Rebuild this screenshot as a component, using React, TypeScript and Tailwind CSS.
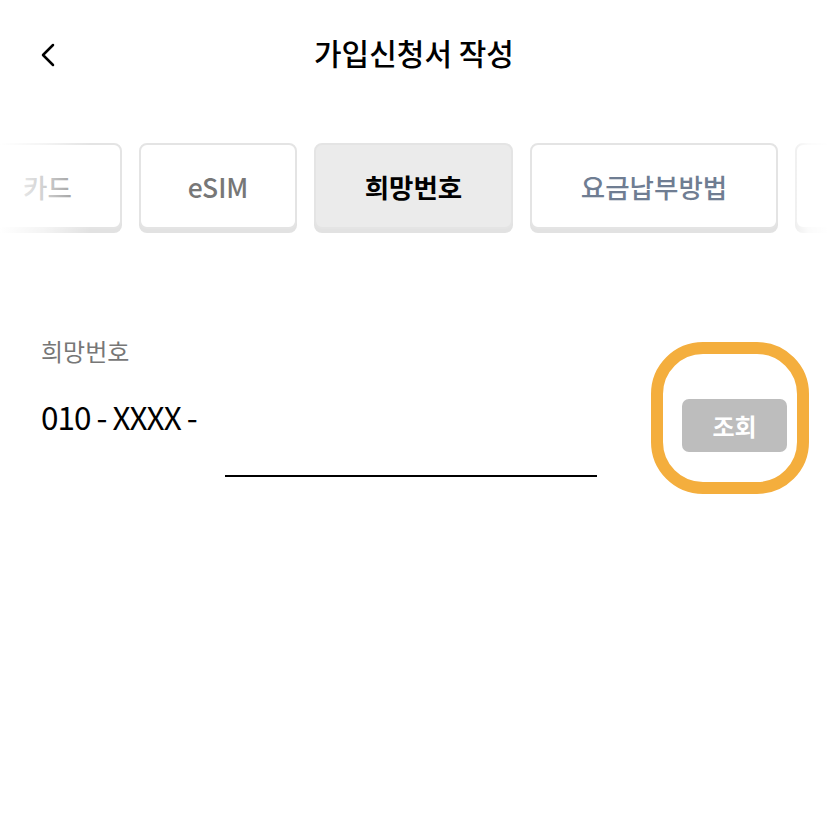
import { ChevronLeft } from "lucide-react";

const font = "font-['Noto_Sans_CJK_KR','Noto_Sans',sans-serif]";

const tabs = [
  { label: "카드", cls: "w-[149px] -ml-[27px] text-[#888888]" },
  { label: "eSIM", cls: "w-[158px] text-[#777777]" },
  { label: "희망번호", cls: "w-[199px] bg-[#ebebeb] font-bold text-black", active: true },
  { label: "요금납부방법", cls: "w-[248px] text-[#6f7d92]" },
  { label: "", cls: "w-[120px]" },
];

export default function App() {
  return (
    <div className={`relative w-[828px] h-[834px] bg-white overflow-hidden ${font}`}>
      <header className="relative h-[104px] flex items-center justify-center">
        <button className="absolute left-[28px] top-[35px] text-black" aria-label="뒤로">
          <ChevronLeft size={40} strokeWidth={1.5} />
        </button>
        <h1 className="text-[30px] font-medium text-black">가입신청서 작성</h1>
      </header>

      <div className="relative mt-[39px] h-[96px]">
        <div className="flex gap-[17px]">
          {tabs.map((t, i) => (
            <div
              key={i}
              className={`shrink-0 h-[86px] pt-[2px] rounded-[8px] border-2 border-[#e4e4e4] shadow-[0_4px_0_#e2e2e2] flex items-center justify-center text-[26.5px] ${t.active ? "" : "bg-white font-medium"} ${t.cls}`}
            >
              {t.label}
            </div>
          ))}
        </div>
        <div className="absolute left-0 top-0 h-[96px] w-[90px] bg-gradient-to-r from-white via-white/60 to-transparent" />
        <div className="absolute right-0 top-0 h-[96px] w-[40px] bg-gradient-to-l from-white via-white/85 to-white/20" />
      </div>

      <section className="mt-[100px] px-[41px]">
        <div className="text-[24px] text-[#777777] leading-none">희망번호</div>
        <div className="mt-[32px] flex items-start">
          <div className="text-[31.5px] text-black leading-none tracking-[-1px] w-[184px] pt-[6px]">010 - XXXX -</div>
          <div className="w-[373px] h-[82px] border-b-2 border-black" />
          <button className="ml-[85px] mt-[4px] w-[105px] h-[53px] rounded-[7px] bg-[#bdbdbd] text-white text-[24px] font-bold">
            조회
          </button>
        </div>
      </section>

      <div className="absolute left-[651px] top-[342px] w-[158px] h-[152px] rounded-[52px] border-[12px] border-[#f4ae3d]" />
    </div>
  );
}
